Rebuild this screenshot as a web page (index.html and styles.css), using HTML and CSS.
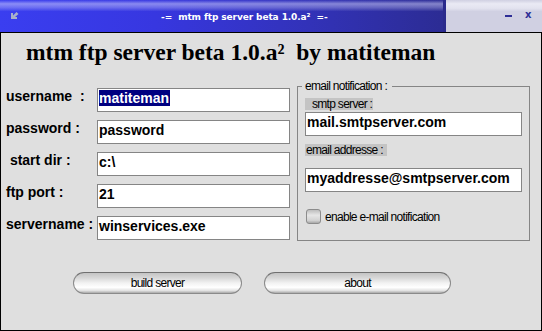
FILE: index.html
```html
<!DOCTYPE html>
<html>

<head>
    <title>mtm ftp server beta 1.0.a²</title>
    <link rel="stylesheet" href="styles.css">
</head>

<body>
    <div class="window">
        <div class="titlebar">
            <div class="tb-main">
                <svg class="tb-icon" width="8" height="7" viewBox="0 0 8 7">
                    <path d="M0 1 H2 V3.5 L5.5 0 L7.5 2 L4 5 H6 V7 H0 Z" fill="#a9b0c9" />
                </svg>
                <span class="tb-title">-=&nbsp; mtm ftp server beta 1.0.a²&nbsp; =-</span>
            </div>
            <div class="tb-divider"></div>
            <div class="tb-side">
                <span class="tb-min"></span>
                <span class="tb-close">x</span>
            </div>
        </div>

        <div class="content">
            <h1 class="heading">mtm ftp server beta 1.0.a²&nbsp;&nbsp;by matiteman</h1>

            <div class="main">
                <div class="fields">
                    <div class="row">
                        <span class="label">username  :</span>
                        <div class="box"><span class="sel">matiteman</span></div>
                    </div>
                    <div class="row">
                        <span class="label">password :</span>
                        <div class="box">password</div>
                    </div>
                    <div class="row">
                        <span class="label"> start dir :</span>
                        <div class="box">c:\</div>
                    </div>
                    <div class="row">
                        <span class="label">ftp port :</span>
                        <div class="box">21</div>
                    </div>
                    <div class="row">
                        <span class="label">servername :</span>
                        <div class="box">winservices.exe</div>
                    </div>
                </div>

                <fieldset class="notify">
                    <legend>email notification :</legend>
                    <div class="tag tag-smtp">smtp server :</div>
                    <div class="box box-wide">mail.smtpserver.com</div>
                    <div class="tag tag-mail">email addresse :</div>
                    <div class="box box-wide box-mail">myaddresse@smtpserver.com</div>
                    <label class="check"><span class="checkbox"></span>enable e-mail notification</label>
                </fieldset>
            </div>

            <div class="buttons">
                <button class="pill pill-build">build server</button>
                <button class="pill pill-about">about</button>
            </div>
        </div>
    </div>
</body>

</html>
```
FILE: styles.css
```css
body {
    margin: 0;
    padding: 0;
    font-family: "Liberation Sans", Arial, sans-serif;
}

.window {
    width: 542px;
    height: 331px;
}

/* title bar */
.titlebar {
    display: flex;
    height: 32px;
}

.tb-main {
    width: 443px;
    display: flex;
    align-items: flex-start;
    background:
        linear-gradient(to bottom, rgba(255, 255, 255, 0) 0, rgba(220, 220, 255, 0.5) 12%, rgba(220, 220, 255, 0.3) 24%, rgba(255, 255, 255, 0) 36%),
        linear-gradient(to right, #3a3ef0 0%, #3737e0 35%, #3232b8 70%, #2c2c94 100%);
}

.tb-icon {
    margin: 12px 0 0 11px;
}

.tb-title {
    margin: 12px 0 0 142px;
    color: #fff;
    font-family: "DejaVu Sans", sans-serif;
    font-weight: bold;
    font-size: 9px;
    line-height: 11px;
    letter-spacing: -0.1px;
    white-space: pre;
}

.tb-divider {
    width: 3px;
    background: #2a2a8c;
}

.tb-side {
    flex: 1;
    display: flex;
    align-items: flex-start;
    background:
        linear-gradient(to bottom, rgba(255, 255, 255, 0) 0, rgba(245, 245, 252, 0.7) 12%, rgba(245, 245, 252, 0.5) 26%, rgba(255, 255, 255, 0) 36%),
        #d0d0e2;
}

.tb-min {
    width: 7px;
    height: 2px;
    margin: 15px 0 0 59px;
    background: #2d2d96;
}

.tb-close {
    margin: 9px 0 0 13px;
    color: #2d2d96;
    font-family: "DejaVu Sans", sans-serif;
    font-weight: bold;
    font-size: 10px;
    line-height: 11px;
}

/* window body */
.content {
    height: 299px;
    box-sizing: border-box;
    border: 1px solid #000;
    background: #dfdfdf;
}

.heading {
    margin: 7px 0 16px 25px;
    font-family: "Liberation Serif", "Times New Roman", serif;
    font-size: 23.5px;
    line-height: 24px;
    font-weight: bold;
    white-space: nowrap;
}

.main {
    display: flex;
    align-items: flex-start;
}

.fields {
    width: 289px;
    padding-top: 8px;
    display: flex;
    flex-direction: column;
    gap: 8px;
}

.row {
    display: flex;
    height: 24px;
}

.label {
    width: 91px;
    padding-left: 5px;
    font-size: 14px;
    font-weight: bold;
    line-height: 16px;
    white-space: pre;
}

.box {
    width: 193px;
    height: 24px;
    box-sizing: border-box;
    padding: 1px 0 0 1px;
    border: 1px solid #858585;
    background: #fff;
    font-size: 14px;
    font-weight: bold;
    line-height: 16px;
    white-space: nowrap;
    overflow: hidden;
}

.sel {
    background: #000080;
    color: #fff;
    padding-right: 1px;
}

/* email notification group */
.notify {
    width: 233px;
    height: 161px;
    box-sizing: border-box;
    margin: 0 0 0 7px;
    padding: 5px 0 0 7px;
    border: 1px solid #858585;
}

.notify legend {
    margin-left: -3px;
    padding: 0 5px 0 3px;
    font-size: 12px;
    line-height: 13px;
    letter-spacing: -0.7px;
}

.tag {
    height: 12px;
    font-size: 12px;
    line-height: 12px;
    letter-spacing: -0.7px;
    background: #c4c4c4;
    white-space: nowrap;
}

.tag-smtp {
    width: 61px;
    padding-left: 7px;
}

.tag-mail {
    width: 81px;
    padding-left: 1px;
    margin-top: 8px;
}

.box-wide {
    width: 217px;
    margin-top: 2px;
}

.box-mail {
    margin-top: 12px;
}

.check {
    display: flex;
    align-items: center;
    gap: 4px;
    margin-top: 17px;
    font-size: 12px;
    line-height: 14px;
    letter-spacing: -0.7px;
}

.checkbox {
    width: 15px;
    height: 15px;
    margin-left: 1px;
    box-sizing: border-box;
    border: 1px solid #8c8c8c;
    border-radius: 3px;
    background: linear-gradient(to bottom, #bdbdbd, #e6e6e6 40%, #d2d2d2 80%, #a8a8a8);
}

/* buttons */
.buttons {
    display: flex;
    gap: 22px;
    margin: 31px 0 0 72px;
}

.pill {
    height: 22px;
    padding: 0;
    border: 1px solid #8a8a8a;
    border-top-color: #707070;
    border-radius: 11px;
    background: linear-gradient(to bottom, #c4c4c4 0%, #d8d8d8 25%, #f2f2f2 50%, #ffffff 72%, #e2e2e2 88%, #a8a8a8 100%);
    font-family: "Liberation Sans", Arial, sans-serif;
    font-size: 12px;
    letter-spacing: -0.7px;
    color: #000;
    cursor: pointer;
}

.pill-build {
    width: 169px;
}

.pill-about {
    width: 187px;
}
```
